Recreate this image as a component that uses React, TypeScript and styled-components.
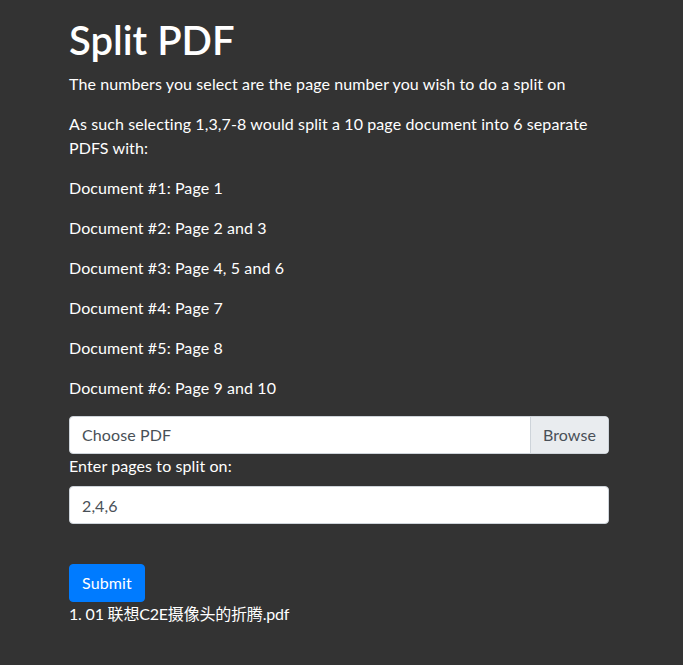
import React, { useState } from 'react';
import styled, { createGlobalStyle } from 'styled-components';

const FONT = `"Lato", "Noto Sans CJK SC", sans-serif`;

const GlobalStyle = createGlobalStyle`
  * { box-sizing: border-box; }
  body {
    margin: 0;
    background: #333333;
    color: #ffffff;
    font-family: ${FONT};
    font-size: 16px;
    line-height: 1.5;
    letter-spacing: 0.1px;
  }
`;

const PARTS = [
  'Page 1',
  'Page 2 and 3',
  'Page 4, 5 and 6',
  'Page 7',
  'Page 8',
  'Page 9 and 10',
];

const App = () => {
  const [pages, setPages] = useState('2,4,6');
  const files = ['01 联想C2E摄像头的折腾.pdf'];

  return (
    <>
      <GlobalStyle />
      <Container>
        <Title>Split PDF</Title>
        <Text>The numbers you select are the page number you wish to do a split on</Text>
        <Text>As such selecting 1,3,7-8 would split a 10 page document into 6 separate PDFS with:</Text>
        {PARTS.map((p, i) => (
          <Text key={i}>
            Document #{i + 1}: {p}
          </Text>
        ))}
        <form onSubmit={(e) => e.preventDefault()}>
          <FileBox>
            <FileLabel>Choose PDF</FileLabel>
            <BrowseBtn>Browse</BrowseBtn>
          </FileBox>
          <FormGroup>
            <Label>Enter pages to split on:</Label>
            <Input value={pages} onChange={(e) => setPages(e.target.value)} />
          </FormGroup>
          <br />
          <SubmitBtn type="submit">Submit</SubmitBtn>
        </form>
        <FileList>
          {files.map((f, i) => (
            <li key={i}>{f}</li>
          ))}
        </FileList>
      </Container>
    </>
  );
};

export default App;

const Container = styled.div`
  width: 540px;
  margin-left: 69px;
  padding-top: 16px;
`;

const Title = styled.h1`
  font-size: 40px;
  font-weight: 600;
  line-height: 1.2;
  letter-spacing: 0;
  margin: 0 0 8px 0;
`;

const Text = styled.p`
  margin: 0 0 16px 0;
`;

const FileBox = styled.div`
  display: flex;
  height: 38px;
  background: #ffffff;
  border: 1px solid #ced4da;
  border-radius: 4px;
  overflow: hidden;
`;

const FileLabel = styled.div`
  flex: 1;
  padding: 6px 12px;
  color: #495057;
  line-height: 24px;
`;

const BrowseBtn = styled.div`
  padding: 6px 12px;
  color: #495057;
  background: #e9ecef;
  border-left: 1px solid #ced4da;
  line-height: 24px;
`;

const FormGroup = styled.div`
  margin-bottom: 16px;
`;

const Label = styled.label`
  display: inline-block;
  margin-bottom: 8px;
`;

const Input = styled.input`
  display: block;
  width: 100%;
  height: 38px;
  padding: 6px 12px;
  font-family: ${FONT};
  font-size: 16px;
  line-height: 1.5;
  letter-spacing: 0.1px;
  color: #495057;
  background: #ffffff;
  border: 1px solid #ced4da;
  border-radius: 4px;
  outline: none;
`;

const SubmitBtn = styled.button`
  display: block;
  height: 38px;
  padding: 6px 12px;
  font-family: ${FONT};
  font-size: 16px;
  line-height: 1.5;
  letter-spacing: 0.13px;
  color: #ffffff;
  background: #007bff;
  border: 1px solid #007bff;
  border-radius: 4px;
  cursor: pointer;
`;

const FileList = styled.ol`
  margin: 0;
  padding: 0;
  list-style-position: inside;
  letter-spacing: -0.2px;
`;
